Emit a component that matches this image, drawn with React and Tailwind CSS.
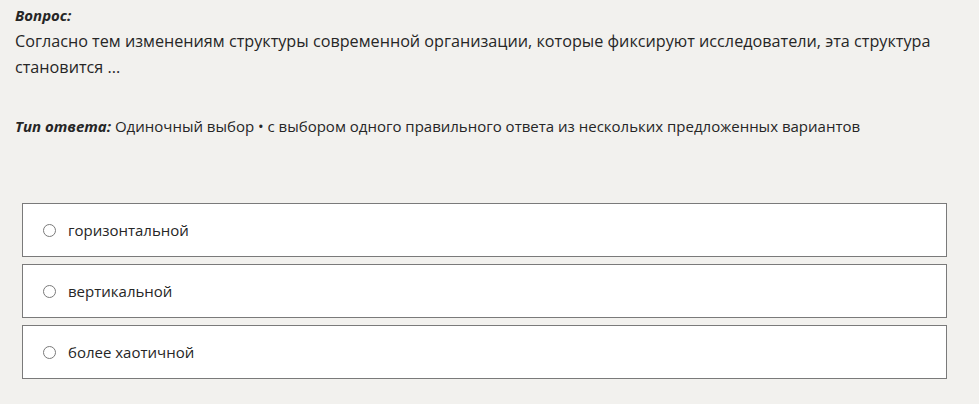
import * as React from 'react';

const OPTIONS = ['горизонтальной', 'вертикальной', 'более хаотичной']

function Option({ label }) {
  return (
    <label className="flex items-center h-[54px] border border-[#7a7a7a] bg-white pl-[20px] cursor-pointer">
      <span className="w-[13px] h-[13px] rounded-full border border-[#7a7a7a] bg-white shrink-0" />
      <span className="ml-[12px] text-[#262626]">{label}</span>
    </label>
  )
}

export default function App() {
  return (
    <div className="min-h-[404px] bg-[#f2f1ee] text-[#262626] text-[15px] leading-[26px] pl-[15px] pr-[32px] pt-[2px]" style={{ fontFamily: '"Open Sans", "Noto Sans", sans-serif' }}>
      <div className="font-bold italic">Вопрос:</div>
      <div className="text-[16.2px]">
        Согласно тем изменениям структуры современной организации, которые фиксируют исследователи, эта структура становится ...
      </div>
      <div className="mt-[33px]">
        <span className="font-bold italic">Тип ответа:</span> Одиночный выбор • с выбором одного правильного ответа из нескольких предложенных вариантов
      </div>
      <div className="mt-[64px] ml-[7px] flex flex-col gap-[7px]">
        {OPTIONS.map(o => <Option key={o} label={o} />)}
      </div>
    </div>
  )
}
